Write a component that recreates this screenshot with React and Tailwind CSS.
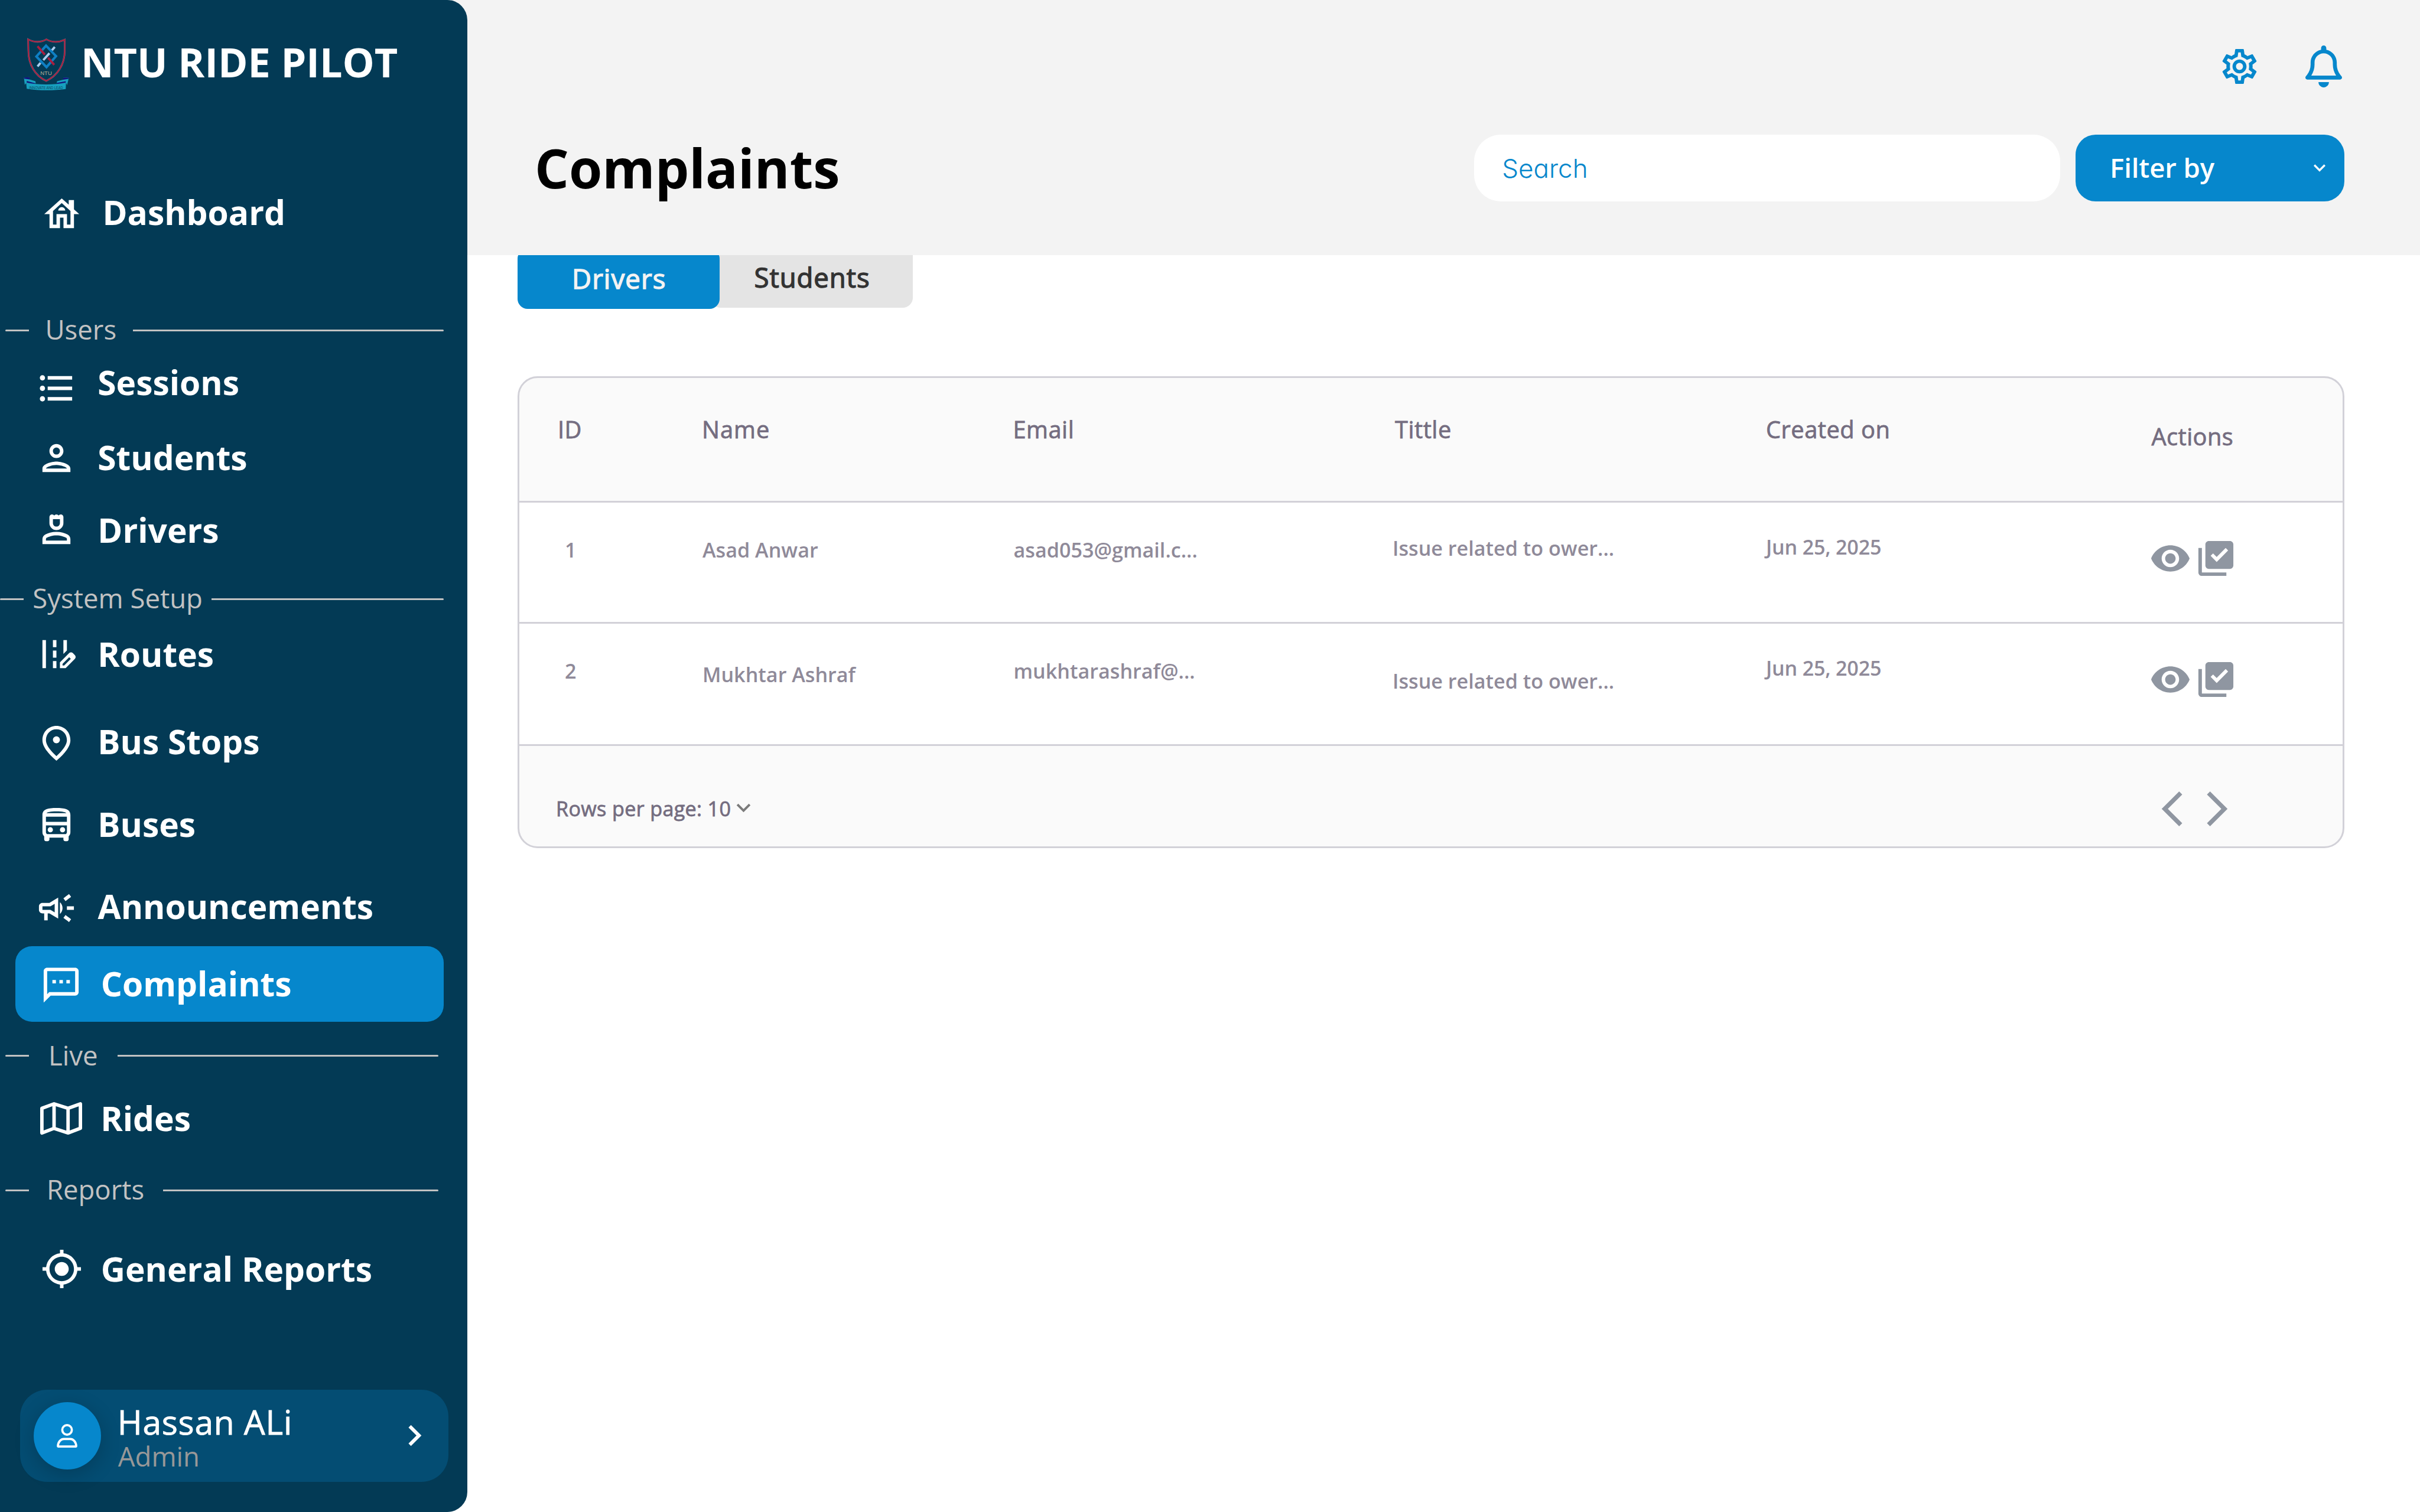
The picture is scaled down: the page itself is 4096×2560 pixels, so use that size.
import {
  MdChevronRight,
  MdExpandMore,
  MdFormatListBulleted,
  MdLibraryAddCheck,
  MdMyLocation,
  MdOutlineCampaign,
  MdOutlineSettings,
  MdRemoveRedEye,
} from "react-icons/md";

/* ---------- icons ---------- */

function Glyph({ d, className }) {
  return (
    <svg viewBox="0 0 24 24" fill="currentColor" className={className} aria-hidden="true">
      {d.map((p) => (
        <path key={p} d={p} />
      ))}
    </svg>
  );
}

const HouseIcon = (p) => (
  <Glyph
    {...p}
    d={[
      "M19 9.3V4h-3v2.6L12 3 2 12h3v8h6v-6h2v6h6v-8h3l-3-2.7zM17 18h-2v-6H9v6H7v-7.81l5-4.5 5 4.5V18z",
      "M10 10h4c0-1.1-.9-2-2-2s-2 .9-2 2z",
    ]}
  />
);

const PersonIcon = (p) => (
  <Glyph
    {...p}
    d={[
      "M12 6c1.1 0 2 .9 2 2s-.9 2-2 2-2-.9-2-2 .9-2 2-2m0 10c2.7 0 5.8 1.29 6 2H6c.23-.72 3.31-2 6-2m0-12C9.79 4 8 5.79 8 8s1.79 4 4 4 4-1.79 4-4-1.79-4-4-4zm0 10c-2.67 0-8 1.34-8 4v2h16v-2c0-2.66-5.33-4-8-4z",
    ]}
  />
);

const DriverIcon = (p) => (
  <Glyph
    {...p}
    d={[
      "M18.39 14.56C16.71 13.7 14.53 13 12 13s-4.71.7-6.39 1.56C4.61 15.07 4 16.1 4 17.22V20h16v-2.78c0-1.12-.61-2.15-1.61-2.66zM18 18H6v-.78c0-.38.2-.72.52-.88C7.71 15.73 9.63 15 12 15s4.29.73 5.48 1.34c.32.16.52.5.52.88V18z",
      "M12 12c2.21 0 4-1.79 4-4V4.5c0-.83-.67-1.5-1.5-1.5-.52 0-.98.27-1.25.67-.27-.4-.73-.67-1.25-.67s-.98.27-1.25.67c-.27-.4-.73-.67-1.25-.67C8.67 3 8 3.67 8 4.5V8c0 2.21 1.79 4 4 4zm-2-6.25h4V8c0 1.1-.9 2-2 2s-2-.9-2-2V5.75z",
    ]}
  />
);

const RouteIcon = (p) => (
  <Glyph
    {...p}
    d={[
      "M18 4h-2v7.9l2-2V4zM4 4h2v16H4zM10 4h2v4h-2zM10 10h2v4h-2zM10 16h2v4h-2z",
      "M22.56 12.59l-1.15-1.15c-.59-.59-1.54-.59-2.12 0L14 16.73V20h3.27l5.29-5.29c.59-.59.59-1.54 0-2.12zm-6.12 5.91h-.94v-.94l3.8-3.8.94.94-3.8 3.8z",
    ]}
  />
);

const StopIcon = (p) => (
  <Glyph
    {...p}
    d={[
      "M12 12c-1.1 0-2-.9-2-2s.9-2 2-2 2 .9 2 2-.9 2-2 2zm6-1.8C18 6.57 15.35 4 12 4s-6 2.57-6 6.2c0 2.34 1.95 5.44 6 9.14 4.05-3.7 6-6.8 6-9.14zM12 2c4.2 0 8 3.22 8 8.2 0 3.32-2.67 7.25-8 11.8-5.33-4.55-8-8.48-8-11.8C4 5.22 7.8 2 12 2z",
    ]}
  />
);

const BusIcon = (p) => (
  <Glyph
    {...p}
    d={[
      "M12 2c-4.42 0-8 .5-8 4v10c0 .88.39 1.67 1 2.22V20c0 .55.45 1 1 1h1c.55 0 1-.45 1-1v-1h8v1c0 .55.45 1 1 1h1c.55 0 1-.45 1-1v-1.78c.61-.55 1-1.34 1-2.22V6c0-3.5-3.58-4-8-4zm5.66 2.99H6.34C6.89 4.46 8.31 4 12 4s5.11.46 5.66.99zM18 6.99V10H6V6.99h12zm-.34 9.74l-.29.27H6.63l-.29-.27C6.21 16.62 6 16.37 6 16v-4h12v4c0 .37-.21.62-.34.73z",
      "M10 14.5a1.5 1.5 0 1 1-3 0 1.5 1.5 0 0 1 3 0zM17 14.5a1.5 1.5 0 1 1-3 0 1.5 1.5 0 0 1 3 0z",
    ]}
  />
);

const MessageIcon = (p) => (
  <Glyph
    {...p}
    d={[
      "M20 2H4c-1.1 0-2 .9-2 2v18l4-4h14c1.1 0 2-.9 2-2V4c0-1.1-.9-2-2-2zm0 14H5.17L4 17.17V4h16v12z",
      "M7 9h2v2H7zM11 9h2v2h-2zM15 9h2v2h-2z",
    ]}
  />
);

const PrevIcon = (p) => (
  <Glyph {...p} d={["M17.77 3.77 16 2 6 12 16 22 17.77 20.23 9.54 12z"]} />
);

const NextIcon = (p) => (
  <Glyph {...p} d={["M6.23 20.23 8 22 18 12 8 2 6.23 3.77 14.46 12z"]} />
);

function MapIcon({ className }) {
  return (
    <svg viewBox="0 0 71 71" fill="none" stroke="currentColor" strokeWidth="5.8" strokeLinejoin="round" className={className} aria-hidden="true">
      <path d="M2.9 18.5 23.5 10.9 47.2 18.5 68.1 10.9V52.3L47.2 60.2 23.5 52.4 2.9 60.2zM23.5 10.9V52.4M47.2 18.5V60.2" />
    </svg>
  );
}

function BellIcon({ className }) {
  return (
    <svg viewBox="0 0 448 512" fill="currentColor" className={className} aria-hidden="true">
      <path d="M224 0c-17.7 0-32 14.3-32 32V51.2C119 66 64 130.6 64 208v25.4c0 45.4-15.5 89.5-43.8 124.9L5.3 377c-5.8 7.2-6.9 17.1-2.9 25.4S14.8 416 24 416H424c9.2 0 17.6-5.3 21.6-13.6s2.9-18.2-2.9-25.4l-14.9-18.6C399.5 322.9 384 278.8 384 233.4V208c0-77.4-55-142-128-156.8V32c0-17.7-14.3-32-32-32zm0 96c61.9 0 112 50.1 112 112v25.4c0 47.9 13.9 94.6 39.7 134.6H72.3C98.1 328 112 281.3 112 233.4V208c0-61.9 50.1-112 112-112zm64 352H160c0 17 6.7 33.3 18.7 45.3S207 512 224 512s33.3-6.7 45.3-18.7S288 465 288 448z" />
    </svg>
  );
}

function AvatarIcon({ className }) {
  return (
    <svg viewBox="0 0 35 40" fill="none" stroke="currentColor" strokeWidth="3.7" strokeLinejoin="round" className={className} aria-hidden="true">
      <circle cx="17.5" cy="10" r="8.1" />
      <path d="M2 37.8C2 31 6.6 25.3 12 25.3h11c5.4 0 10 5.7 10 12.5 0 .3-.2.3-.4.3H2.4c-.2 0-.4 0-.4-.3z" />
    </svg>
  );
}

function CrestLogo({ className }) {
  return (
    <svg viewBox="0 0 420 480" className={className} role="img" aria-label="NTU crest">
      <path d="M82 70C125 94 178 92 212 70 250 92 300 94 343 73V150C343 250 290 330 211 366 132 330 84 250 84 150z" fill="none" stroke="#c9b9c6" strokeWidth="12" opacity=".55" />
      <path d="M82 70C125 94 178 92 212 70 250 92 300 94 343 73V150C343 250 290 330 211 366 132 330 84 250 84 150z" fill="none" stroke="#a91e3f" strokeWidth="9.5" />
      <path d="M210 115 281 190 213 268 141 192z" fill="none" stroke="#0f80c4" strokeWidth="17" />
      <path d="M272 124 252 147M234 169 190 218M170 238 149 263" fill="none" stroke="#a9cdee" strokeWidth="16" />
      <path d="M149 119 201 179M224 201 268 252" fill="none" stroke="#a91e3f" strokeWidth="16" />
      <path d="M52 342 92 340V356L134 368 136 384 70 380 58 394z" fill="#1a9fc0" />
      <path d="M372 344 332 342V358L288 368 286 384 352 380 360 396z" fill="#1a9fc0" />
      <path d="M52 342 92 340V356L54 350zM372 344 332 342V358L370 352zM72 366 130 382 132 390 72 388zM350 368 288 380 286 390 350 390z" fill="#14147c" />
      <path d="M68 378C160 396 262 396 352 378L350 424C262 436 160 436 72 422z" fill="#17a0bf" />
      <text x="210" y="325" textAnchor="middle" className="font-['Liberation_Sans'] text-[40px]" fill="#b9b096">NTU</text>
      <text x="210" y="425" textAnchor="middle" textLength="240" lengthAdjust="spacingAndGlyphs" className="font-['Liberation_Sans'] text-[31px]" fill="#0d4660">INNOVATE AND LEAD</text>
    </svg>
  );
}

/* ---------- sidebar ---------- */

function NavItem({ icon: Icon, label, row, text }) {
  return (
    <a className={`flex h-[71px] shrink-0 items-center ${row}`}>
      <Icon className="size-[71px] shrink-0" />
      <span className={`text-[56.89px] leading-[71px] font-bold whitespace-nowrap ${text}`}>{label}</span>
    </a>
  );
}

function Divider({ label, row, dash, text, rule }) {
  return (
    <div className={`flex h-[62px] shrink-0 items-center text-[#c2c2c2] ${row}`}>
      <span className={`h-[3px] rounded-l-full bg-current ${dash}`} />
      <span className={`-translate-y-[2px] text-[45.51px] leading-[62px] whitespace-nowrap ${text}`}>{label}</span>
      <span className={`h-[3px] rounded-r-full bg-current ${rule}`} />
    </div>
  );
}

function Sidebar() {
  return (
    <aside className="relative z-20 flex h-[2560px] w-[791px] shrink-0 flex-col rounded-r-[34px] bg-[#033a55] text-white">
      <div className="mt-[50px] flex h-[114px] shrink-0 items-center pl-[28px]">
        <CrestLogo className="h-[114px] w-[100px] shrink-0" />
        <span className="ml-[9px] -translate-y-[2px] text-[68.27px] leading-[92px] font-bold whitespace-nowrap">NTU RIDE PILOT</span>
      </div>

      <NavItem icon={HouseIcon} label="Dashboard" row="mt-[163px] pl-[68.5px]" text="ml-[34px] -translate-y-[3px]" />

      <Divider label="Users" row="mt-[130px] pl-[9px]" dash="w-[39.5px]" text="ml-[27.9px] w-[148.2px]" rule="w-[526px]" />
      <NavItem icon={MdFormatListBulleted} label="Sessions" row="mt-[32px] pl-[59.5px]" text="ml-[34.8px] -translate-y-[10.5px]" />
      <NavItem icon={PersonIcon} label="Students" row="mt-[47px] pl-[59.5px]" text="ml-[34.8px] -translate-y-[1px]" />
      <NavItem icon={DriverIcon} label="Drivers" row="mt-[51px] pl-[59.5px]" text="ml-[34.8px] -translate-y-[0.5px]" />

      <Divider label="System Setup" row="mt-[50px]" dash="w-[40px]" text="ml-[15.3px] w-[303px]" rule="w-[392.4px]" />
      <NavItem icon={RouteIcon} label="Routes" row="mt-[27px] pl-[59.5px]" text="ml-[34.8px]" />
      <NavItem icon={StopIcon} label="Bus Stops" row="mt-[80px] pl-[59.5px]" text="ml-[34.8px] -translate-y-[3px]" />
      <NavItem icon={BusIcon} label="Buses" row="mt-[68px] pl-[59.5px]" text="ml-[34.8px] -translate-y-[2.5px]" />
      <NavItem icon={MdOutlineCampaign} label="Announcements" row="mt-[69px] pl-[59.5px]" text="ml-[35px] -translate-y-[3px]" />

      <div className="mt-[28.5px] ml-[25.8px] flex h-[128px] w-[725px] shrink-0 items-center rounded-[28px] bg-[#0687cc] pl-[42.5px]">
        <MessageIcon className="size-[71px] shrink-0 translate-y-[2.5px]" />
        <span className="ml-[31.5px] -translate-y-[0.5px] text-[56.89px] leading-[71px] font-bold">Complaints</span>
      </div>

      <Divider label="Live" row="mt-[27px] pl-[9px]" dash="w-[39.5px]" text="ml-[33.5px] w-[117px]" rule="w-[543.3px]" />
      <NavItem icon={MapIcon} label="Rides" row="mt-[39px] pl-[68px]" text="ml-[31.2px]" />

      <Divider label="Reports" row="mt-[55.5px] pl-[9px]" dash="w-[39.5px]" text="ml-[30.4px] w-[196.8px]" rule="w-[466.5px]" />
      <NavItem icon={MdMyLocation} label="General Reports" row="mt-[67px] pl-[68.5px]" text="ml-[31.3px]" />

      <div className="mt-[168.5px] ml-[34.2px] flex h-[156.5px] w-[725.3px] shrink-0 items-center rounded-[45.5px] bg-[#044d73] pl-[22.6px]">
        <div className="flex size-[114px] shrink-0 items-center justify-center rounded-full bg-[#0687cc] shadow-[0_8px_34px_rgba(0,0,0,0.2)]">
          <AvatarIcon className="h-[40px] w-[35px]" />
        </div>
        <div className="ml-[28px] flex w-[439px] flex-col pt-[8.6px]">
          <span className="text-[56.89px] leading-[60px] tracking-[0.72px] [-webkit-text-stroke:0.8px_currentColor]">Hassan ALi</span>
          <span className="ml-[1px] text-[45.51px] leading-[56px] text-[#989898]">Admin</span>
        </div>
        <MdChevronRight className="ml-[28px] size-[71px] shrink-0" />
      </div>
    </aside>
  );
}

/* ---------- header ---------- */

function Header() {
  return (
    <header className="relative z-10 -ml-[60px] flex h-[432px] flex-col bg-[#f3f3f3] pl-[174px] text-[#0687cc]">
      <div className="mt-[77px] flex h-[71px] items-center justify-end gap-[75.5px] pr-[132.3px]">
        <MdOutlineSettings className="size-[71px]" />
        <BellIcon className="h-[71px] w-[62px]" />
      </div>
      <div className="mt-[79.6px] flex h-[113.8px] items-center pr-[128px]">
        <h1 className="-translate-y-[1px] text-[91.02px] leading-[114px] font-bold text-black">Complaints</h1>
        <div className="ml-auto flex h-full w-[992px] items-center rounded-[45.5px] bg-white pl-[47.5px]">
          <span className="translate-y-[1px] font-[Inter] text-[44px] leading-[60px] font-light [font-feature-settings:'cv11']">Search</span>
        </div>
        <button className="ml-[26.3px] flex h-full w-[455px] items-center justify-between rounded-[34px] bg-[#0687cc] pr-[22.5px] pl-[58px] text-white">
          <span className="-translate-y-[0.6px] text-[45.51px] leading-[62px] font-semibold tracking-[-0.1px]">Filter by</span>
          <MdExpandMore className="size-[40px]" />
        </button>
      </div>
    </header>
  );
}

/* ---------- content ---------- */

function Tabs() {
  return (
    <div className="-mt-[13.5px] ml-[85px] flex text-[45.51px] leading-[62px]">
      <div className="relative z-[1] mt-[2.5px] flex h-[102.4px] w-[341.5px] items-center justify-center rounded-[17px] bg-[#0687cc] text-[#f3f3f3]">
        <span className="translate-x-[1px] -translate-y-[1px] tracking-[1.1px] [-webkit-text-stroke:1.4px_currentColor]">Drivers</span>
      </div>
      <div className="-ml-[14.2px] flex h-[102.4px] w-[341.5px] items-center justify-center rounded-b-[17px] bg-[#e4e4e4] text-[#333333]">
        <span className="translate-x-[0.5px] -translate-y-[1px] tracking-[0.97px] [-webkit-text-stroke:1.4px_currentColor]">Students</span>
      </div>
    </div>
  );
}

const GRID = "grid grid-cols-[243.5px_526px_643.5px_631px_650px_1fr] items-start pl-[65px]";

const HEADINGS = [
  { label: "ID", cell: "mt-[60px]" },
  { label: "Name", cell: "mt-[60px] ml-[0.5px] tracking-[1px]" },
  { label: "Email", cell: "mt-[60px] ml-[1px]" },
  { label: "Tittle", cell: "mt-[60px] ml-[4px]" },
  { label: "Created on", cell: "mt-[60px] ml-[1px]" },
  { label: "Actions", cell: "mt-[71.4px] ml-[3.5px] tracking-[0.4px]" },
];

const ROWS = [
  {
    id: "1",
    height: "h-[204.6px]",
    actions: "mt-[59px]",
    cells: [
      { text: "1", cell: "mt-[57px] ml-[12px]" },
      { text: "Asad Anwar", cell: "mt-[57px] ml-[1.5px]" },
      { text: "asad053@gmail.c...", cell: "mt-[57px] ml-[2px]" },
      { text: "Issue related to ower...", cell: "mt-[54.5px]" },
      { text: "Jun 25, 2025", cell: "mt-[52px] ml-[1px] tracking-[-0.2px]" },
    ],
  },
  {
    id: "2",
    height: "h-[207.8px]",
    actions: "mt-[59.3px]",
    cells: [
      { text: "2", cell: "mt-[57.7px] ml-[12px]" },
      { text: "Mukhtar Ashraf", cell: "mt-[63.5px] ml-[1.5px]" },
      { text: "mukhtarashraf@...", cell: "mt-[57.7px] ml-[2px]" },
      { text: "Issue related to ower...", cell: "mt-[74.6px]" },
      { text: "Jun 25, 2025", cell: "mt-[52px] ml-[1px] tracking-[-0.2px]" },
    ],
  },
];

function ComplaintsTable() {
  return (
    <div className="mt-[114px] ml-[85px] flex h-[799px] w-[3092px] flex-col overflow-hidden rounded-[34px] border-[3px] border-[#d2d1d8] bg-[#fafafa]">
      <div className={`${GRID} h-[207.6px] text-[39.82px] leading-[54px] tracking-[0.5px] text-[#746d80] [-webkit-text-stroke:0.8px_currentColor]`}>
        {HEADINGS.map((h) => (
          <span key={h.label} className={h.cell}>{h.label}</span>
        ))}
      </div>

      {ROWS.map((row) => (
        <div key={row.id} className={`${GRID} ${row.height} shrink-0 border-t-[3px] border-[#d2d1d8] bg-white text-[34.13px] leading-[46px] font-semibold text-[#8f8a99]`}>
          {row.cells.map((c, i) => (
            <span key={i} className={`whitespace-nowrap ${c.cell}`}>{c.text}</span>
          ))}
          <div className={`flex gap-[6px] text-[#8f96a1] ${row.actions}`}>
            <MdRemoveRedEye className="size-[71px]" />
            <MdLibraryAddCheck className="size-[71px]" />
          </div>
        </div>
      ))}

      <div className="flex grow items-center justify-between border-t-[3px] border-[#d2d1d8] pt-[42px] pr-[177px] pl-[62px]">
        <div className="flex items-center text-[#746d80]">
          <span className="text-[34.13px] leading-[46px] tracking-[0.35px] [-webkit-text-stroke:0.8px_currentColor]">Rows per page: 10</span>
          <MdExpandMore className="-ml-[2.3px] size-[47px] -translate-y-[2px] text-[#7b7b7b]" />
        </div>
        <div className="flex gap-[5.5px] text-[#8f96a1]">
          <PrevIcon className="size-[71px]" />
          <NextIcon className="size-[71px]" />
        </div>
      </div>
    </div>
  );
}

export default function App() {
  return (
    <div className="flex h-[2560px] w-[4096px] overflow-hidden bg-white font-['Open_Sans','Noto_Sans',sans-serif]">
      <Sidebar />
      <main className="flex min-w-0 grow flex-col">
        <Header />
        <Tabs />
        <ComplaintsTable />
      </main>
    </div>
  );
}
